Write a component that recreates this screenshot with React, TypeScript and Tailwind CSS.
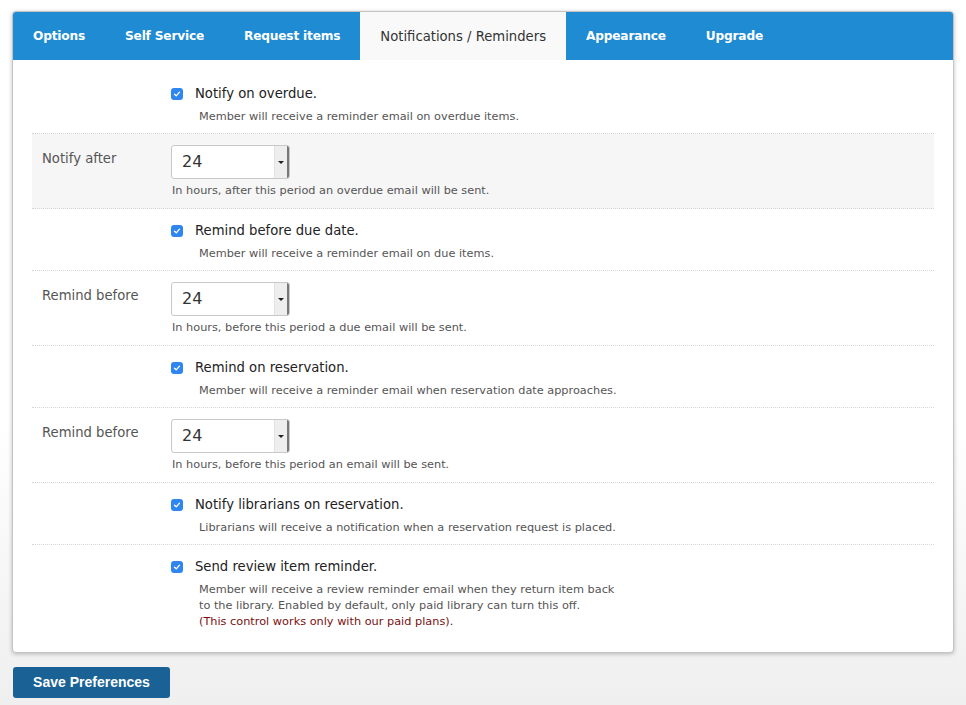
import React from 'react';

const tabs = ['Options', 'Self Service', 'Request items', 'Notifications / Reminders', 'Appearance', 'Upgrade'];

const Check: React.FC = () => (
  <span className="mt-[4px] flex h-[12px] w-[12px] shrink-0 items-center justify-center rounded-[3px] bg-[#2f86ef]">
    <svg viewBox="0 0 12 12" className="h-[10px] w-[10px]">
      <path d="M3 6.2 L5.1 8.2 L9 3.8" fill="none" stroke="white" strokeWidth="1.6" strokeLinecap="round" strokeLinejoin="round" />
    </svg>
  </span>
);

const CheckRow: React.FC<{ title: string; children: React.ReactNode; first?: boolean; last?: boolean }> = ({ title, children, first, last }) => (
  <div className={`pl-[139px] pb-[8px] ${first ? 'pt-[24px]' : 'pt-3'} ${last ? '' : 'border-b border-dotted border-[#d6d6d6]'}`}>
    <div className="flex h-[20px] items-start gap-3 text-[13.2px] leading-[20px] text-[#222]">
      <Check />
      <span>{title}</span>
    </div>
    <div className="mt-[5px] pl-[28px] text-[11.3px] leading-[16px] text-[#555]">{children}</div>
  </div>
);

const SelectRow: React.FC<{ label: string; help: string; shaded?: boolean }> = ({ label, help, shaded }) => (
  <div className={`flex border-b border-dotted border-[#d6d6d6] pt-[11px] pb-[9px] ${shaded ? 'bg-[#f6f6f6]' : ''}`}>
    <div className="w-[139px] shrink-0 pl-[10px] pt-[4px] text-[13.2px] leading-[20px] text-[#555]">{label}</div>
    <div>
      <div className="flex h-[34px] w-[119px] overflow-hidden rounded-[3px] border border-[#c8c8c8] bg-white">
        <div className="flex-1 pl-[10px] text-[16px] leading-[32px] text-[#333]">24</div>
        <div className="flex w-[15px] items-center justify-center border-l border-[#e2e2e2] border-r-2 border-r-[#777] bg-[#eeeeee]">
          <span className="h-0 w-0 border-x-[3px] border-t-[3px] border-x-transparent border-t-[#222]" />
        </div>
      </div>
      <div className="mt-[4px] pl-[1px] text-[11.3px] leading-[16px] text-[#555]">{help}</div>
    </div>
  </div>
);

export default function App() {
  return (
    <div className="min-h-[705px] bg-gradient-to-b from-white from-60% to-[#efefef] px-[12px] pt-[11px] pb-[7px] font-['DejaVu_Sans',Verdana,sans-serif]">
      <div className="w-[942px] overflow-hidden rounded-[4px] border border-[#c4c4c4] bg-white shadow-[0_1px_4px_rgba(0,0,0,0.25)]">
        <div className="flex h-[48px] bg-[#1f8bd3]">
          {tabs.map((t) => (
            <div
              key={t}
              className={`flex items-center px-[20px] pt-[1px] ${
                t === 'Notifications / Reminders'
                  ? 'bg-[#f9f9f9] text-[13.2px] text-[#333]'
                  : 'text-[12.2px] font-bold tracking-[-0.2px] text-white'
              }`}
            >
              {t}
            </div>
          ))}
        </div>
        <div className="px-[19px] pb-[14px]">
          <CheckRow title="Notify on overdue." first>
            Member will receive a reminder email on overdue items.
          </CheckRow>
          <SelectRow label="Notify after" help="In hours, after this period an overdue email will be sent." shaded />
          <CheckRow title="Remind before due date.">Member will receive a reminder email on due items.</CheckRow>
          <SelectRow label="Remind before" help="In hours, before this period a due email will be sent." />
          <CheckRow title="Remind on reservation.">
            Member will receive a reminder email when reservation date approaches.
          </CheckRow>
          <SelectRow label="Remind before" help="In hours, before this period an email will be sent." />
          <CheckRow title="Notify librarians on reservation.">
            Librarians will receive a notification when a reservation request is placed.
          </CheckRow>
          <CheckRow title="Send review item reminder." last>
            Member will receive a review reminder email when they return item back
            <br />
            to the library. Enabled by default, only paid library can turn this off.
            <br />
            <span className="text-[#7a1010]">(This control works only with our paid plans).</span>
          </CheckRow>
        </div>
      </div>
      <button className="mt-[14px] ml-[1px] h-[31px] w-[157px] rounded-[3px] bg-[#1a6295] font-['Liberation_Sans',Arial,sans-serif] text-[14px] font-bold text-white">
        Save Preferences
      </button>
    </div>
  );
}
